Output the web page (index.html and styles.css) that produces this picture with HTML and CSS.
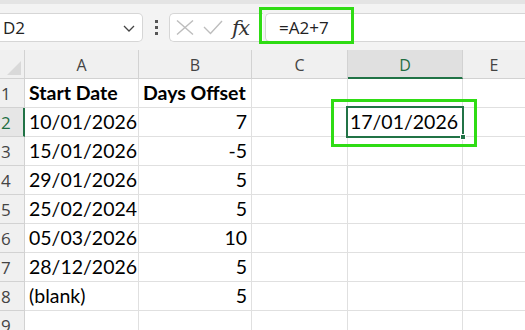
FILE: index.html
```html
<!DOCTYPE html>
<html>
<head>
<meta charset="utf-8">
<link rel="stylesheet" href="styles.css">
</head>
<body>
<div class="app">
  <div class="toolbar">
    <div class="namebox">
      <span class="name">D2</span>
      <svg class="chev" width="12" height="7" viewBox="0 0 12 7"><path d="M1 1 L6 6 L11 1" fill="none" stroke="#444" stroke-width="1.3"/></svg>
    </div>
    <div class="dots"><i></i><i></i><i></i></div>
    <div class="fbuttons">
      <svg width="18" height="15" viewBox="0 0 18 15"><path d="M1 0.5 L17 14.5 M17 0.5 L1 14.5" stroke="#bdbdbd" stroke-width="1.4" fill="none"/></svg>
      <svg width="20" height="15" viewBox="0 0 20 15"><path d="M1 7 L7.5 13.5 L19 1" stroke="#bdbdbd" stroke-width="1.4" fill="none"/></svg>
      <span class="fx">fx</span>
    </div>
    <div class="finput"><span class="ftext">=A2+7</span></div>
  </div>
  <div class="grid">
    <div class="corner"><div class="tri"></div></div>
    <div class="ch">A</div>
    <div class="ch">B</div>
    <div class="ch">C</div>
    <div class="ch sel">D</div>
    <div class="ch last">E</div>

    <div class="rh">1</div><div class="c b">Start Date</div><div class="c b">Days Offset</div><div class="c"></div><div class="c"></div><div class="c last"></div>
    <div class="rh rsel">2</div><div class="c">10/01/2026</div><div class="c r">7</div><div class="c"></div><div class="c r">17/01/2026</div><div class="c last"></div>
    <div class="rh">3</div><div class="c">15/01/2026</div><div class="c r">-5</div><div class="c"></div><div class="c"></div><div class="c last"></div>
    <div class="rh">4</div><div class="c">29/01/2026</div><div class="c r">5</div><div class="c"></div><div class="c"></div><div class="c last"></div>
    <div class="rh">5</div><div class="c">25/02/2024</div><div class="c r">5</div><div class="c"></div><div class="c"></div><div class="c last"></div>
    <div class="rh">6</div><div class="c">05/03/2026</div><div class="c r">10</div><div class="c"></div><div class="c"></div><div class="c last"></div>
    <div class="rh">7</div><div class="c">28/12/2026</div><div class="c r">5</div><div class="c"></div><div class="c"></div><div class="c last"></div>
    <div class="rh">8</div><div class="c">(blank)</div><div class="c r">5</div><div class="c"></div><div class="c"></div><div class="c last"></div>
    <div class="rh">9</div><div class="c"></div><div class="c"></div><div class="c"></div><div class="c"></div><div class="c last"></div>
  </div>
  <div class="cellsel"><div class="handle"></div></div>
  <div class="hl hl-formula"></div>
  <div class="hl hl-cell"></div>
</div>
</body>
</html>
```
FILE: styles.css
```css
* { box-sizing: border-box; }
html, body { margin: 0; padding: 0; }
body { width: 525px; height: 330px; overflow: hidden; background: #fff; }
.app { position: relative; width: 525px; height: 330px; overflow: hidden; font-family: "Open Sans", "Noto Sans", sans-serif; }

.toolbar {
  height: 50px;
  background: #f3f3f3;
  border-top: 4px solid #e4e4e4;
  display: flex;
  align-items: flex-start;
  padding-top: 9px;
}
.namebox {
  width: 143px; height: 29px;
  background: #fff;
  border: 1px solid #d6d6d6;
  border-left: none;
  border-radius: 0 5px 5px 0;
  display: flex; align-items: center;
  padding-left: 3px; padding-right: 7px;
}
.name { font-size: 17px; color: #222; flex: 1; }
.chev { margin-top: 1px; }
.dots { width: 26px; height: 29px; display: flex; flex-direction: column; align-items: center; justify-content: center; gap: 3px; }
.dots i { display: block; width: 3px; height: 3px; background: #555; }
.fbuttons {
  width: 94px; height: 29px;
  background: #fff;
  border: 1px solid #d6d6d6;
  border-right: none;
  border-radius: 5px 0 0 5px;
  display: flex; align-items: center;
  padding-left: 6px;
  gap: 9px;
}
.fx { font-family: "DejaVu Serif", "Liberation Serif", serif; font-style: italic; font-size: 21px; line-height: 22px; color: #333; margin-left: 0; letter-spacing: -1.5px; }
.finput {
  flex: 1; height: 29px;
  margin-left: 2px;
  background: #fff;
  border: 1px solid #d6d6d6;
  border-right: none;
  border-radius: 5px 0 0 5px;
  display: flex; align-items: center;
  padding-left: 13px;
}
.ftext { font-size: 17px; color: #222; }

.grid {
  display: grid;
  grid-template-columns: 25px 114px 113px 96px 115px 62px;
  grid-auto-rows: 29px;
}
.corner, .ch, .rh { background: #f0f0f0; border-right: 1px solid #d2d2d2; border-bottom: 1px solid #d2d2d2; }
.corner { position: relative; }
.tri { position: absolute; right: 3px; bottom: 3px; width: 0; height: 0; border-left: 14px solid transparent; border-bottom: 14px solid #d9d9d9; }
.ch { display: flex; align-items: center; justify-content: center; font-size: 16px; color: #444; padding-top: 2px; }
.ch.sel { background: #e0e0e0; color: #1e6e42; border-bottom: 2px solid #217346; }
.ch.last { border-right: none; }
.rh { font-size: 17px; color: #444; display: flex; align-items: flex-end; padding-left: 1px; padding-bottom: 2px; line-height: 22px; }
.rh.rsel { color: #1e6e42; border-right: 2px solid #217346; background: #e6e6e6; }
.c {
  border-right: 1px solid #e0e0e0; border-bottom: 1px solid #e0e0e0;
  font-family: Lato, "Open Sans", sans-serif;
  font-size: 19.5px; color: #000;
  display: flex; align-items: flex-end;
  padding: 0 4px 2px 4px;
  line-height: 24px;
  white-space: nowrap;
}
.c.b { font-weight: bold; }
.c.r { justify-content: flex-end; }
.c.last { border-right: none; }

.cellsel { position: absolute; left: 346px; top: 106px; width: 118px; height: 32px; border: 2px solid #217346; }
.handle { position: absolute; right: -4px; bottom: -4px; width: 6px; height: 6px; background: #217346; border: 1px solid #fff; }
.hl { position: absolute; border: 3px solid #2fdc14; }
.hl-formula { left: 259px; top: 7px; width: 95px; height: 37px; }
.hl-cell { left: 331px; top: 99px; width: 146px; height: 48px; }
```
